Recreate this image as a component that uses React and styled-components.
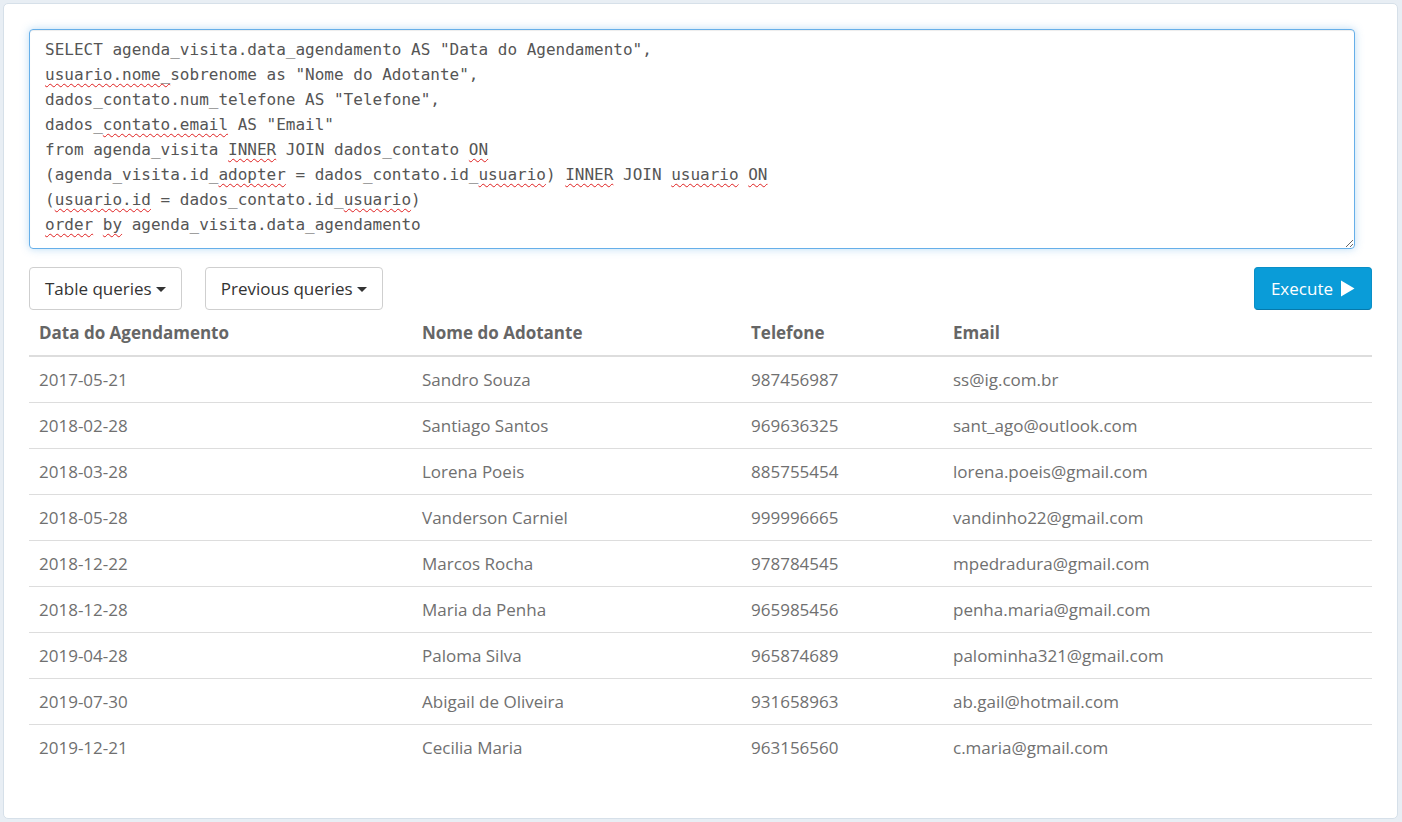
import React from 'react'
import styled, { createGlobalStyle } from 'styled-components'

const rows = [
  ['2017-05-21', 'Sandro Souza', '987456987', 'ss@ig.com.br'],
  ['2018-02-28', 'Santiago Santos', '969636325', 'sant_ago@outlook.com'],
  ['2018-03-28', 'Lorena Poeis', '885755454', 'lorena.poeis@gmail.com'],
  ['2018-05-28', 'Vanderson Carniel', '999996665', 'vandinho22@gmail.com'],
  ['2018-12-22', 'Marcos Rocha', '978784545', 'mpedradura@gmail.com'],
  ['2018-12-28', 'Maria da Penha', '965985456', 'penha.maria@gmail.com'],
  ['2019-04-28', 'Paloma Silva', '965874689', 'palominha321@gmail.com'],
  ['2019-07-30', 'Abigail de Oliveira', '931658963', 'ab.gail@hotmail.com'],
  ['2019-12-21', 'Cecilia Maria', '963156560', 'c.maria@gmail.com'],
]

const S = ({ children }) => <Spell>{children}</Spell>

const App = () => {
  return (
    <>
      <Global />
      <Card>
        <Editor spellCheck={false}>
          <Line>SELECT agenda_visita.data_agendamento AS "Data do Agendamento",</Line>
          <Line><S>usuario.nome_</S>sobrenome as "Nome do Adotante",</Line>
          <Line>dados_contato.num_telefone AS "Telefone",</Line>
          <Line>dados_<S>contato.email</S> AS "Email"</Line>
          <Line>from agenda_visita <S>INNER</S> JOIN dados_contato <S>ON</S></Line>
          <Line>(agenda_visita.id_<S>adopter</S> = dados_contato.id_<S>usuario</S>) <S>INNER</S> JOIN <S>usuario</S> <S>ON</S></Line>
          <Line>(<S>usuario.id</S> = dados_contato.id_<S>usuario</S>)</Line>
          <Line><S>order</S> <S>by</S> agenda_visita.data_agendamento</Line>
        </Editor>
        <Toolbar>
          <Button>Table queries<Caret /></Button>
          <Button>Previous queries<Caret /></Button>
          <Spacer />
          <ExecuteButton>
            Execute
            <svg width="15" height="17" viewBox="0 0 15 17">
              <path d="M1 0.5 L14.5 8.5 L1 16.5 Z" fill="#fff" />
            </svg>
          </ExecuteButton>
        </Toolbar>
        <Table>
          <colgroup>
            <col style={{ width: 383 }} />
            <col style={{ width: 329 }} />
            <col style={{ width: 202 }} />
            <col />
          </colgroup>
          <thead>
            <tr>
              <Th>Data do Agendamento</Th>
              <Th>Nome do Adotante</Th>
              <Th>Telefone</Th>
              <Th>Email</Th>
            </tr>
          </thead>
          <tbody>
            {rows.map((r, i) => (
              <tr key={i}>
                {r.map((c, j) => <Td key={j}>{c}</Td>)}
              </tr>
            ))}
          </tbody>
        </Table>
      </Card>
    </>
  )
}

// ///// Style ////////
const Global = createGlobalStyle`
  html, body {
    margin: 0;
    padding: 0;
    background: #e8eef4;
    font-family: "Open Sans", "Liberation Sans", sans-serif;
  }
  * { box-sizing: border-box; }
`

const Card = styled.div`
  margin: 3px 4px 0 3px;
  height: 816px;
  background: #fff;
  border: 1px solid #d6e0e9;
  border-radius: 5px;
  padding: 25px 25px 0 25px;
`

const Editor = styled.div`
  height: 220px;
  margin-right: 17px;
  border: 1px solid #66afe9;
  border-radius: 4px;
  box-shadow: inset 0 1px 1px rgba(0,0,0,.075), 0 0 8px rgba(102,175,233,.45);
  padding: 7px 15px;
  font-family: "DejaVu Sans Mono", "Liberation Mono", monospace;
  font-size: 16px;
  line-height: 25px;
  color: #555;
  resize: vertical;
  overflow: auto;
`

const Line = styled.div`
  white-space: pre;
`

const Spell = styled.span`
  text-decoration: underline wavy #e02020;
  text-decoration-thickness: 1px;
  text-underline-offset: 3px;
  text-decoration-skip-ink: none;
`

const Toolbar = styled.div`
  display: flex;
  align-items: center;
  gap: 23px;
  margin-top: 18px;
`

const Spacer = styled.div`
  flex: 1;
`

const Button = styled.button`
  height: 43px;
  padding: 0 15px;
  background: #fff;
  border: 1px solid #cfcfcf;
  border-radius: 4px;
  font-family: inherit;
  font-size: 17px;
  color: #333;
  display: flex;
  align-items: center;
  cursor: pointer;
`

const Caret = styled.span`
  display: inline-block;
  width: 0;
  height: 0;
  margin-left: 4px;
  margin-top: 2px;
  border-top: 5px solid #333;
  border-left: 5px solid transparent;
  border-right: 5px solid transparent;
`

const ExecuteButton = styled(Button)`
  background: #0a9cd8;
  border: 1px solid #0a8fc7;
  border-bottom-color: #0679ab;
  color: #fff;
  gap: 7px;
  padding: 0 16px;
`

const Table = styled.table`
  width: 100%;
  border-collapse: collapse;
  table-layout: fixed;
  font-size: 17px;
  color: #707070;
`

const Th = styled.th`
  text-align: left;
  font-weight: 700;
  color: #666;
  padding: 10px;
  line-height: 25px;
  border-bottom: 2px solid #dddddd;
`

const Td = styled.td`
  padding: 10px 10px;
  line-height: 25px;
  tr + tr & {
    border-top: 1px solid #dddddd;
  }
`

export default App
